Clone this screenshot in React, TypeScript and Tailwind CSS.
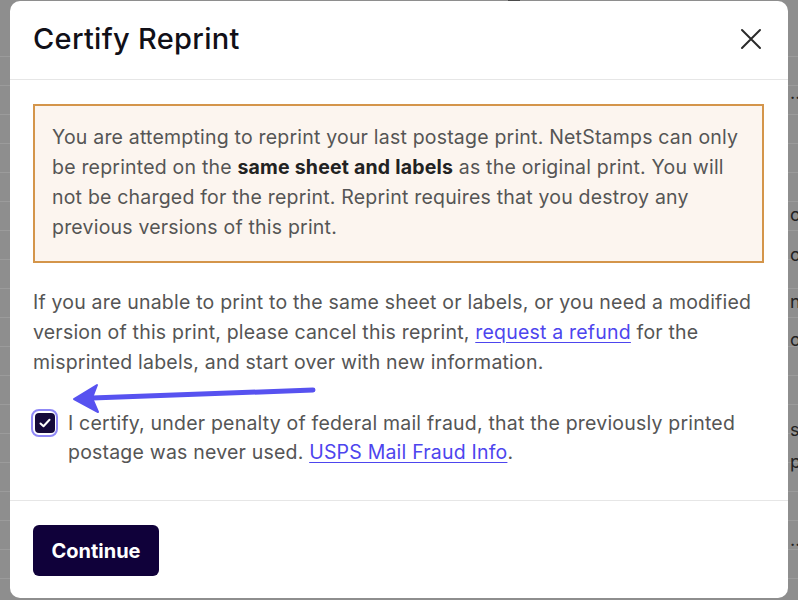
import React from "react";

const leftLines = Array.from({ length: 21 }, (_, i) => i);
const rightFrags: { t: string; y: string }[] = [
  { t: "···", y: "top-[88px]" },
  { t: "og", y: "top-[205px]" },
  { t: "og", y: "top-[245px]" },
  { t: "ne", y: "top-[292px]" },
  { t: "og", y: "top-[330px]" },
  { t: "s", y: "top-[420px]" },
  { t: "pa", y: "top-[452px]" },
  { t: "··", y: "top-[535px]" },
];

export default function App() {
  return (
    <div
      className="relative w-[798px] h-[600px] overflow-hidden bg-[#8e8e8e]"
      style={{ fontFamily: "Inter, 'Noto Sans', sans-serif" }}
    >
      {/* page behind the overlay */}
      <div className="flex flex-col pt-[28px]">
        {leftLines.map((i) => (
          <div key={i} className="h-[29px] border-b border-[#9b9b9b]" />
        ))}
      </div>
      <div className="absolute left-[508px] top-0 w-[12px] h-[2px] bg-[#4a4a4a]" />
      {rightFrags.map((f, i) => (
        <div
          key={i}
          className={`absolute left-[790px] ${f.y} text-[18px] leading-[20px] text-[#222]`}
        >
          {f.t}
        </div>
      ))}

      {/* modal */}
      <div className="absolute left-[10px] top-[1px] w-[778px] h-[597px] bg-white rounded-[10px] flex flex-col">
        <div className="h-[79px] border-b border-[#e6e6e6] flex items-center justify-between pl-[23px] pr-[25px] pb-[2px]">
          <h1 className="text-[29px] font-medium text-[#111018] tracking-[0.3px]">Certify Reprint</h1>
          <button className="w-[24px] h-[24px] flex items-center justify-center text-[#2a2a2a]">
            <svg width="22" height="22" viewBox="0 0 22 22" fill="none" stroke="currentColor" strokeWidth="2" strokeLinecap="round">
              <path d="M2 2 L20 20 M20 2 L2 20" />
            </svg>
          </button>
        </div>

        <div className="flex flex-col pl-[23px] pr-[24px] pt-[24px] pb-[33px] text-[19.5px] leading-[30px] text-[#555555] tracking-[0.2px]">
          <div className="border-2 border-[#d4954a] bg-[#fcf5ef] pl-[17px] pr-[4px] pt-[16px] pb-[19px] whitespace-nowrap">
            You are attempting to reprint your last postage print. NetStamps can only
            <br />
            be reprinted on the <b className="font-bold text-[#222]">same sheet and labels</b> as the original print. You will
            <br />
            not be charged for the reprint. Reprint requires that you destroy any
            <br />
            previous versions of this print.
          </div>

          <p className="mt-[24px] whitespace-nowrap">
            If you are unable to print to the same sheet or labels, or you need a modified
            <br />
            version of this print, please cancel this reprint,{" "}
            <a className="text-[#4d45ee] underline underline-offset-[3px]">request a refund</a> for the
            <br />
            misprinted labels, and start over with new information.
          </p>

          <div className="mt-[32px] flex items-start gap-[10px] leading-[29px]">
            <div className="mt-[0px] -ml-[2px] w-[27px] h-[28px] shrink-0 rounded-[8px] border-2 border-[#8f88f6] flex items-center justify-center">
              <div className="w-[20px] h-[20px] rounded-[4px] bg-[#150a3b] flex items-center justify-center">
                <svg width="14" height="14" viewBox="0 0 14 14" fill="none" stroke="white" strokeWidth="2" strokeLinecap="round" strokeLinejoin="round">
                  <path d="M2.5 7.5 L5.5 10.3 L11.5 3.8" />
                </svg>
              </div>
            </div>
            <p className="whitespace-nowrap">
              I certify, under penalty of federal mail fraud, that the previously printed
              <br />
              postage was never used.{" "}
              <a className="text-[#4d45ee] underline underline-offset-[3px]">USPS Mail Fraud Info</a>.
            </p>
          </div>
        </div>

        <div className="border-t border-[#e6e6e6] pl-[23px] pt-[24px]">
          <button className="w-[126px] h-[51px] rounded-[6px] bg-[#10013a] text-white text-[20px] font-bold">
            Continue
          </button>
        </div>
      </div>

      {/* annotation arrow */}
      <svg className="absolute left-0 top-0 pointer-events-none" width="798" height="600">
        <path d="M313 390 L92 398" stroke="#5752f0" strokeWidth="5" strokeLinecap="round" fill="none" />
        <path d="M74 399 L97 385 L92 398 L98 412 Z" fill="#5752f0" stroke="#5752f0" strokeWidth="2" strokeLinejoin="round" />
      </svg>
    </div>
  );
}
